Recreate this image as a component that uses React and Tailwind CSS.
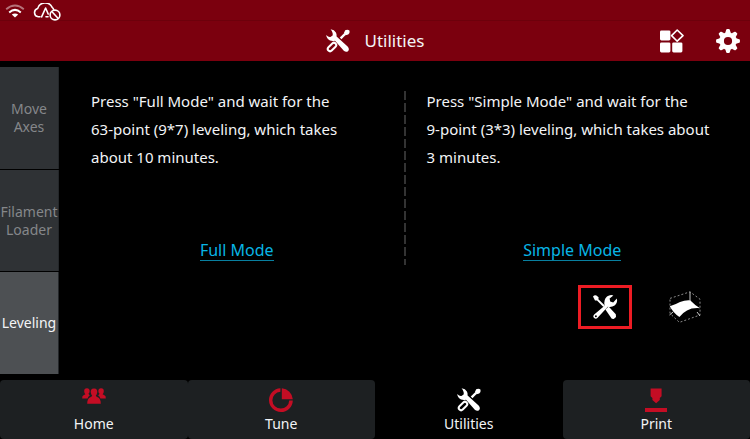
import React, { useState } from 'react';

const WifiIcon = () => (
  <svg width="20" height="16" viewBox="0 0 20 16" fill="none" stroke="#fff">
    <path d="M1.2 5.2Q10-2.2 18.8 5.2" strokeWidth="1.8" opacity="0.45" />
    <path d="M4.2 8.4Q10 3.4 15.8 8.4" strokeWidth="2" />
    <path d="M10 13.6L6.8 10.6Q10 8.2 13.2 10.6Z" fill="#fff" stroke="none" />
  </svg>
);

const CloudOffIcon = () => (
  <svg width="28" height="18" viewBox="0 0 28 18" fill="none" stroke="#fff" strokeWidth="1.6" strokeLinecap="round" strokeLinejoin="round">
    <path d="M7 13.8H5.2A4.2 4.2 0 0 1 4.6 5.6A7.8 7.8 0 0 1 19.2 4.4Q20.6 5.4 20.8 7" />
    <path d="M8.6 13.8L12.6 5L15.2 11M13 13.8H15" />
    <circle cx="22" cy="12" r="4.9" />
    <path d="M19 8.8L25 15.2" />
  </svg>
);

const ToolsIcon = ({ size }) => (
  <svg width={size} height={size} viewBox="0 0 24 24" fill="#fff">
    <path d="M4.6.3Q8.4.7 9.9 3.6Q10.8 5.4 10.6 7.4L21.6 17.4Q23.8 20 22.2 22Q20.2 23.8 17.8 21.8L9 11.8Q6.6 12.4 4 11.6Q.6 9.8.2 6Q2.4 8.4 4.4 8L6.6 6.4Q7.4 4 4.6.3Z" />
    <path d="M14.6 9.4L19 5" stroke="#fff" strokeWidth="2.4" />
    <path d="M17.8 4.2L19.2 1.2Q22 .2 23.6 1.8Q24 4 22.2 5.6L19.6 6.2Z" />
    <rect x="-2.3" y="-5" width="4.6" height="10" rx="2.3" transform="translate(6 18) rotate(45)" fill="none" stroke="#fff" strokeWidth="2" />
  </svg>
);

const RepairIcon = () => (
  <svg width="26" height="26" viewBox="0 0 26 26" fill="#fff">
    <path d="M1 2.6Q2.4.6 4.4 1.4L6.6 3.2L6.4 5.2L12.8 11.6L11.4 13L5 6.6L3 6.4Z" />
    <path d="M13.4 15.4L16.6 12.4L23.8 20.2L24 23L21.8 25L19.8 24.8Z" />
    <path d="M2.2 20.4L12.6 11.8Q11.4 5.6 15 2.6Q17.8.4 21.4 1.4L17.6 4.4L18.2 7.6L21.2 8.4L24.8 4.6Q26 8.6 22.6 11.6Q19.6 13.6 15.8 12.8L5.6 23.8Q3.8 25.6 2.2 24Q.4 22.4 2.2 20.4Z" />
    <circle cx="3.9" cy="22.2" r="1" fill="#000" />
  </svg>
);

const MeshIcon = () => (
  <svg width="34" height="34" viewBox="0 0 34 34" fill="none" stroke="#fff">
    <path d="M2 8.4L22 1.8L32 9.2V25L11.4 32.4L2 23.4Z" stroke="#8a8a8a" strokeWidth="1" strokeDasharray="2 2" />
    <path d="M22 1.8V12M1.5 25L5 22M32 26L29 22" stroke="#ccc" strokeWidth="1" />
    <path d="M1.8 16.2Q7 14.8 12 12Q17 10 22.4 10.4Q26.4 14.6 32 18.2Q24 17.6 19 20.4Q14.6 22.6 11.4 27Q5 22.6 1.8 16.2Z" fill="#fff" stroke="none" />
  </svg>
);

const AppsIcon = () => (
  <svg width="24" height="24" viewBox="0 0 24 24" fill="#fff">
    <rect x="0" y="1.4" width="10.4" height="10" rx="1.4" />
    <rect x="0" y="13.4" width="10.4" height="10" rx="1.4" />
    <rect x="12.2" y="13.4" width="10.2" height="10" rx="1.4" />
    <path d="M17.2 1L23 6.6L17.2 12.2L11.6 6.6Z" fill="none" stroke="#fff" strokeWidth="1.6" strokeLinejoin="round" />
  </svg>
);

const GearIcon = () => (
  <svg width="24" height="24" viewBox="-12 -12 24 24" fill="#fff">
    <circle r="6.4" fill="none" stroke="#fff" strokeWidth="4.6" />
    {[0, 45, 90, 135, 180, 225, 270, 315].map((angle) => (
      <path key={angle} d="M-2.8-8L-1.8-11.2Q-1.6-11.9-.9-11.9H.9Q1.6-11.9 1.8-11.2L2.8-8Z" transform={`rotate(${angle})`} />
    ))}
  </svg>
);

const HomeIcon = () => (
  <svg width="24" height="24" viewBox="0 4 24 24" fill="#c40d24">
    <path d="M4.9 4.2C7 4.2 7.9 5.6 7.6 7.4Q7.4 9 6.4 9.8L7.8 11.4Q6 12.4 5.6 14.4H.2Q0 11.6 1.6 11.2L3.4 10.2Q2.2 9 2.2 7.2C2.1 5.4 3 4.2 4.9 4.2Z" />
    <path d="M19.1 4.2C17 4.2 16.1 5.6 16.4 7.4Q16.6 9 17.6 9.8L16.2 11.4Q18 12.4 18.4 14.4H23.8Q24 11.6 22.4 11.2L20.6 10.2Q21.8 9 21.8 7.2C21.9 5.4 21 4.2 19.1 4.2Z" />
    <path d="M12 4.4C14.8 4.4 15.6 6.2 15.2 8.4Q14.8 10.6 13.8 11.6Q14 12.6 15.6 13.2Q18.8 14.2 18.8 19.8H5.2Q5.2 14.2 8.4 13.2Q10 12.6 10.2 11.6Q9.2 10.6 8.8 8.4C8.4 6.2 9.2 4.4 12 4.4Z" />
  </svg>
);

const TuneIcon = () => (
  <svg width="24" height="24" viewBox="0 0 24 24" fill="#c40d24">
    <path d="M11.4.2V3.8A8.4 8.4 0 1 0 20.2 12.4H23.8A11.9 11.9 0 1 1 11.4.2Z" />
    <path d="M12.8.2A11.9 11.9 0 0 1 23.8 11.2H12.8Z" />
  </svg>
);

const PrintIcon = () => (
  <svg width="24" height="24" viewBox="0 0 24 24" fill="#c40d24">
    <path d="M6.6.4H17.6V8.2L15.8 10V12L12.1 15.2L8.4 12V10L6.6 8.2Z" />
    <rect x="1" y="20" width="22" height="4" />
  </svg>
);

const sections = ['Move Axes', 'Filament Loader', 'Leveling'];

const tabs = [
  { name: 'Home', icon: <HomeIcon /> },
  { name: 'Tune', icon: <TuneIcon /> },
  { name: 'Utilities', icon: <ToolsIcon size={24} /> },
  { name: 'Print', icon: <PrintIcon /> },
];

const modes = [
  {
    name: 'Full Mode',
    lines: ['Press "Full Mode" and wait for the', '63-point (9*7) leveling, which takes', 'about 10 minutes.'],
  },
  {
    name: 'Simple Mode',
    lines: ['Press "Simple Mode" and wait for the', '9-point (3*3) leveling, which takes about', '3 minutes.'],
  },
];

const ModePanel = ({ mode }) => (
  <section className="flex flex-1 flex-col justify-between">
    <p className="whitespace-nowrap text-[15px] leading-7 text-gray-100">
      {mode.lines.map((line) => (
        <span key={line} className="block">{line}</span>
      ))}
    </p>
    <a href="#" className="self-center border-b border-[#087f9f] text-base leading-5 text-[#08b5e5]">
      {mode.name}
    </a>
  </section>
);

export default function App() {
  const [section, setSection] = useState('Leveling');
  const [tab, setTab] = useState('Utilities');

  return (
    <div className="flex min-h-screen flex-col bg-black font-['Noto_Sans',sans-serif] text-gray-100">
      {/* Status + title */}
      <header className="bg-[#7b000e]">
        <div className="flex h-[21px] items-center gap-2 border-b border-[#6d000b] px-[5px] pt-1">
          <WifiIcon />
          <CloudOffIcon />
        </div>
        <div className="grid h-10 grid-cols-[1fr_auto_1fr] items-center px-2.5">
          <h1 className="col-start-2 flex items-center gap-[15px] text-[17px]">
            <ToolsIcon size={24} />
            Utilities
          </h1>
          <div className="flex items-center justify-end gap-8">
            <button aria-label="Apps"><AppsIcon /></button>
            <button aria-label="Settings"><GearIcon /></button>
          </div>
        </div>
      </header>

      <div className="flex flex-1 py-1.5">
        {/* Sections */}
        <nav className="flex w-[59px] shrink-0 flex-col gap-px">
          {sections.map((name) => (
            <button
              key={name}
              onClick={() => setSection(name)}
              className={`flex-1 border-r border-[#24272a] text-sm leading-[18px] ${section === name ? 'bg-[#4d5053] text-gray-100' : 'bg-[#2f3235] text-[#85878a]'}`}
            >
              {name}
            </button>
          ))}
        </nav>

        <main className="flex flex-1 flex-col pt-5 pr-8 pl-8">
          <div className="flex h-[174px] gap-[21px]">
            <ModePanel mode={modes[0]} />
            <svg width="2" height="100%" className="mt-1 shrink-0">
              <line x1="1" y1="0" x2="1" y2="100%" stroke="#333" strokeWidth="2" strokeDasharray="9 3" />
            </svg>
            <ModePanel mode={modes[1]} />
          </div>
          <div className="mt-6 flex items-center justify-end gap-9 pr-4">
            <button aria-label="Repair" className="flex h-11 w-[54px] items-center justify-center border-[3px] border-[#ed1c24]">
              <RepairIcon />
            </button>
            <button aria-label="Bed mesh"><MeshIcon /></button>
          </div>
        </main>
      </div>

      {/* Tabs */}
      <footer className="grid grid-cols-4">
        {tabs.map(({ name, icon }) => (
          <button
            key={name}
            onClick={() => setTab(name)}
            className={`flex flex-col items-center gap-0.5 rounded-sm pt-2 pb-[5px] text-sm leading-5 ${tab === name ? 'bg-black' : 'bg-[#1d2022]'}`}
          >
            {icon}
            {name}
          </button>
        ))}
      </footer>
    </div>
  );
}
